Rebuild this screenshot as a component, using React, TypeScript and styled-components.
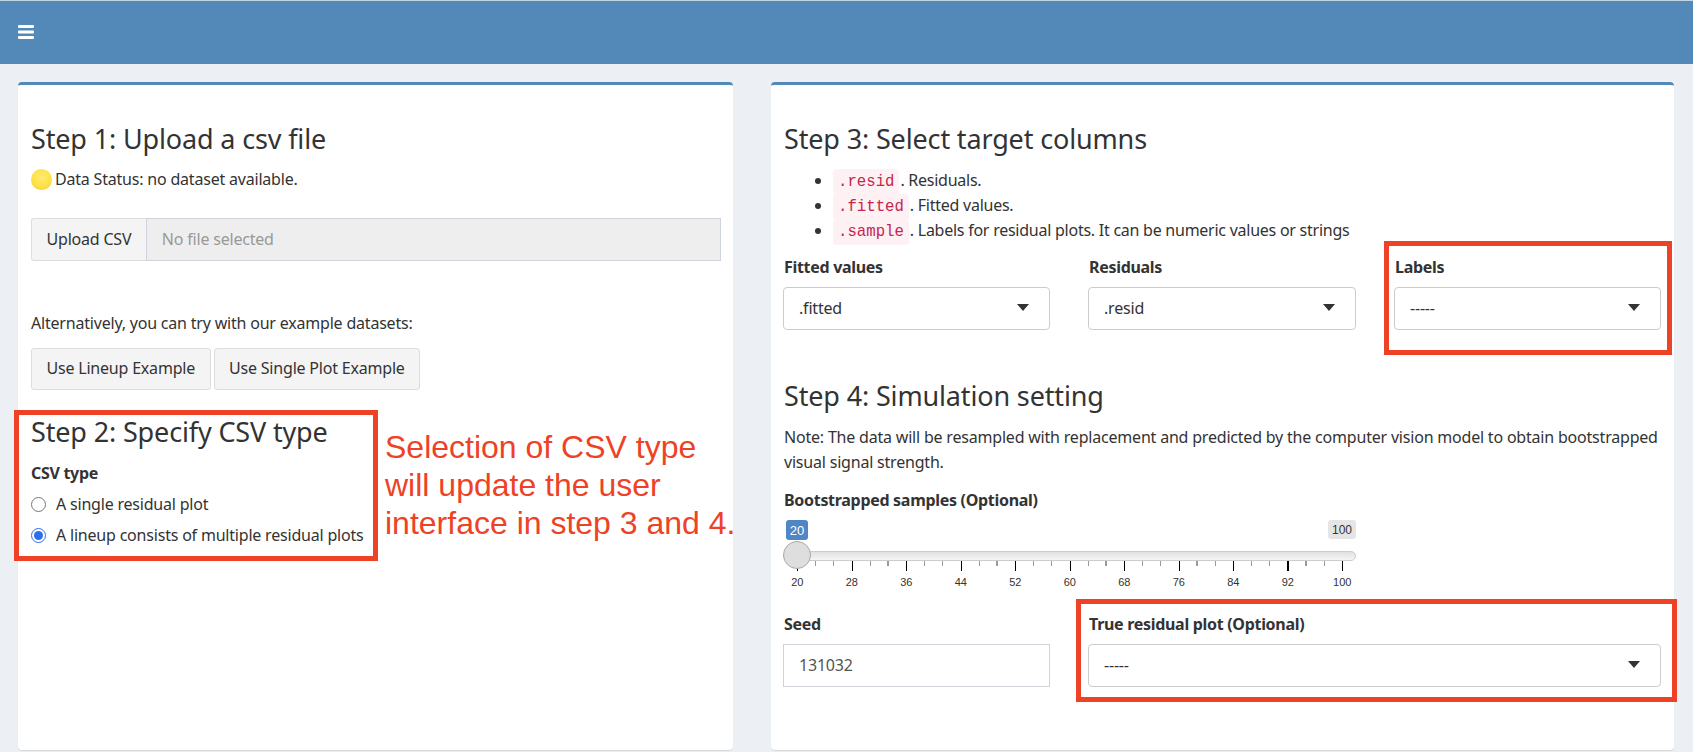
import React from "react";
import styled, { createGlobalStyle } from "styled-components";

const Global = createGlobalStyle`
  html, body { margin: 0; padding: 0; background: #ecf0f5; }
  body { font-family: "Noto Sans", sans-serif; font-size: 16px; color: #333; letter-spacing: -0.2px; }
  * { box-sizing: border-box; }
`;

const Page = styled.div`width: 1693px; height: 752px; overflow: hidden; position: relative;`;
const Header = styled.header`
  height: 64px; background: #5389b8; border-top: 1px solid #c3d3df;
  display: flex; align-items: center; padding-left: 18px; padding-bottom: 1px;
`;
const Main = styled.main`
  display: grid; grid-template-columns: 715px 903px; gap: 38px; padding: 18px 0 0 18px;
`;
const Panel = styled.section`
  position: relative; height: 668px; background: #fff; border-top: 3px solid #5389b8;
  border-radius: 4px; padding: 37px 13px 0; box-shadow: 0 1px 1px rgba(0,0,0,.1);
`;
const Heading = styled.h3<{ $top?: number }>`
  margin: ${p => p.$top ?? 0}px 0 0; font-size: 27px; line-height: 34px; font-weight: 400; color: #333;
  letter-spacing: -0.15px;
`;
const Status = styled.div`
  margin-top: 11px; height: 24px; line-height: 24px; display: flex; align-items: center; gap: 3px;
`;
const Dot = styled.span`
  width: 21px; height: 21px; border-radius: 50%; flex: none;
  background: radial-gradient(circle at 50% 38%, #ffec6e 0%, #fde047 60%, #eebb1e 100%);
`;
const UploadGroup = styled.div`margin: 27px -1px 0 0; display: flex; height: 43px;`;
const Btn = styled.button`
  font: inherit; letter-spacing: inherit; color: #333; background: #f4f4f4; border: 1px solid #ddd;
  border-radius: 3px; padding: 0 14.5px 2px; height: 42px; white-space: nowrap;
`;
const UploadBtn = styled(Btn)`border-radius: 3px 0 0 3px; border-right: 0; height: 43px;`;
const FileBox = styled.div`
  flex: 1; background: #eee; border: 1px solid #ced4da; color: #999; padding: 0 0 1px 15px;
  display: flex; align-items: center;
`;
const Paragraph = styled.p<{ $top: number }>`
  margin: ${p => p.$top}px 0 0; line-height: 24px;
`;
const BtnRow = styled.div`margin-top: 13px; display: flex; gap: 3px;`;
const FieldLabel = styled.div<{ $top?: number }>`
  margin-top: ${p => p.$top ?? 0}px; font-weight: 700; line-height: 24px; letter-spacing: -0.3px;
`;
const ColLabel = styled(FieldLabel)`padding-left: 1px;`;
const RadioRow = styled.label<{ $top: number }>`
  margin-top: ${p => p.$top}px; display: flex; align-items: center; height: 24px; gap: 10px;
`;
const Radio = styled.input`
  width: 15px; height: 15px; margin: 0; accent-color: #2b6ff0; flex: none;
`;
const Highlight = styled.div`
  position: absolute; border: 5px solid #ee4226; pointer-events: none;
`;
const Note = styled.div`
  position: absolute; left: 367px; top: 343px; width: 370px; color: #ee4226;
  font-family: "Liberation Sans", Arial, sans-serif; font-size: 32px; line-height: 38px; letter-spacing: 0;
`;
const List = styled.ul`margin: 12px 0 0; padding-left: 49px;`;
const Item = styled.li`height: 25px; line-height: 25px; letter-spacing: -0.25px;`;
const Code = styled.code`
  font-family: "Liberation Mono", monospace; font-size: 15.7px; line-height: 1; color: #c7254e; background: #fdf1f4;
  border-radius: 4px; padding: 4px 5px; letter-spacing: 0; margin-right: -3px;
`;
const Cols = styled.div<{ $cols: string; $top: number }>`
  display: grid; grid-template-columns: ${p => p.$cols}; column-gap: 38px; margin: ${p => p.$top}px 0 0 -1px;
`;
const SelectBox = styled.div`
  margin-top: 8px; height: 43px; border: 1px solid #ccc; border-radius: 4px; background: #fff;
  display: flex; align-items: center; justify-content: space-between; padding: 0 20px 2px 15px;
`;
const Arrow = styled.span`
  width: 0; height: 0; border-left: 6px solid transparent; border-right: 6px solid transparent;
  border-top: 7px solid #333; margin-top: -1px;
`;
const Input = styled.div`
  margin-top: 8px; height: 43px; border: 1px solid #ced4da; background: #fff; color: #555;
  display: flex; align-items: center; padding: 0 0 2px 15px;
`;
const Paragraph2 = styled.p`margin: 12px 0 0; line-height: 25px;`;
const Slider = styled.div`position: relative; width: 573px; margin: 8px 0 0 -1px; height: 72px;`;
const BadgeRow = styled.div`display: flex; justify-content: space-between; align-items: flex-start; padding-left: 3px; height: 31px;`;
const Badge = styled.span<{ $active?: boolean }>`
  font-family: "Liberation Sans", Arial, sans-serif; letter-spacing: 0; border-radius: 3px;
  display: flex; align-items: center; justify-content: center;
  background: ${p => (p.$active ? "#4f86c6" : "#e5e5e5")};
  color: ${p => (p.$active ? "#fff" : "#333")};
  font-size: ${p => (p.$active ? 13 : 12)}px;
  width: ${p => (p.$active ? 22 : 28)}px; height: ${p => (p.$active ? 20 : 19)}px;
`;
const Track = styled.div`
  height: 10px; border: 1px solid #ccc; border-radius: 5px;
  background: linear-gradient(#e0e0e0, #f5f5f5);
`;
const Handle = styled.div`
  position: absolute; left: 0; top: 21px; width: 28px; height: 28px; border-radius: 50%;
  background: #dedede; border: 1px solid #aaa;
`;
const Ticks = styled.svg`display: block;`;
const TickLabels = styled.div`
  display: grid; grid-template-columns: repeat(11, 54.5px); margin-left: -13px; margin-top: 5px;
  font-family: "Liberation Sans", Arial, sans-serif; font-size: 11px; line-height: 13px; letter-spacing: 0;
  text-align: center; color: #333;
`;

const thickMinor = [5, 11, 17, 22, 28];
const tickRects = Array.from({ length: 31 }, (_, i) => {
  const major = i % 3 === 0;
  const x = Math.round(14 + i * 18.1667);
  const thick = major ? i === 27 : thickMinor.includes(i);
  return (
    <rect key={i} x={x - (thick ? 1 : 0)} y={0} width={thick ? 2 : 1} height={major ? 10 : 5}
      fill={major ? "#000" : "#999"} />
  );
});

const Dropdown = ({ value }: { value: string }) => (
  <SelectBox><span>{value}</span><Arrow /></SelectBox>
);

export default function App() {
  return (
    <Page>
      <Global />
      <Header>
        <svg width="16" height="14" viewBox="0 0 16 14" fill="#fff">
          <rect x="0" y="0" width="16" height="3" rx="1" />
          <rect x="0" y="5.5" width="16" height="3" rx="1" />
          <rect x="0" y="11" width="16" height="3" rx="1" />
        </svg>
      </Header>
      <Main>
        <Panel>
          <Heading>Step 1: Upload a csv file</Heading>
          <Status><Dot />Data Status: no dataset available.</Status>
          <UploadGroup>
            <UploadBtn>Upload CSV</UploadBtn>
            <FileBox>No file selected</FileBox>
          </UploadGroup>
          <Paragraph $top={50}>Alternatively, you can try with our example datasets:</Paragraph>
          <BtnRow>
            <Btn>Use Lineup Example</Btn>
            <Btn>Use Single Plot Example</Btn>
          </BtnRow>
          <Heading $top={25}>Step 2: Specify CSV type</Heading>
          <FieldLabel $top={12}>CSV type</FieldLabel>
          <RadioRow $top={7}><Radio type="radio" name="csv" readOnly />A single residual plot</RadioRow>
          <RadioRow $top={7}><Radio type="radio" name="csv" defaultChecked />A lineup consists of multiple residual plots</RadioRow>
          <Highlight style={{ left: -4, top: 325, width: 364, height: 151 }} />
          <Note>Selection of CSV type<br />will update the user<br />interface in step 3 and 4.</Note>
        </Panel>
        <Panel>
          <Heading>Step 3: Select target columns</Heading>
          <List>
            <Item><Code>.resid</Code> . Residuals.</Item>
            <Item><Code>.fitted</Code> . Fitted values.</Item>
            <Item><Code>.sample</Code> . Labels for residual plots. It can be numeric values or strings</Item>
          </List>
          <Cols $cols="267px 268px 267px" $top={12}>
            <div><ColLabel>Fitted values</ColLabel><Dropdown value=".fitted" /></div>
            <div><ColLabel>Residuals</ColLabel><Dropdown value=".resid" /></div>
            <div><ColLabel>Labels</ColLabel><Dropdown value="-----" /></div>
          </Cols>
          <Heading $top={49}>Step 4: Simulation setting</Heading>
          <Paragraph2>Note: The data will be resampled with replacement and predicted by the computer vision model to obtain bootstrapped visual signal strength.</Paragraph2>
          <FieldLabel $top={13}>Bootstrapped samples (Optional)</FieldLabel>
          <Slider>
            <BadgeRow><Badge $active>20</Badge><Badge>100</Badge></BadgeRow>
            <Track />
            <Handle />
            <Ticks width="573" height="10">{tickRects}</Ticks>
            <TickLabels>
              {[20, 28, 36, 44, 52, 60, 68, 76, 84, 92, 100].map(n => <span key={n}>{n}</span>)}
            </TickLabels>
          </Slider>
          <Cols $cols="267px 573px" $top={20}>
            <div><ColLabel>Seed</ColLabel><Input>131032</Input></div>
            <div><ColLabel>True residual plot (Optional)</ColLabel><Dropdown value="-----" /></div>
          </Cols>
          <Highlight style={{ left: 613, top: 156, width: 288, height: 114 }} />
          <Highlight style={{ left: 305, top: 514, width: 601, height: 103 }} />
        </Panel>
      </Main>
    </Page>
  );
}
